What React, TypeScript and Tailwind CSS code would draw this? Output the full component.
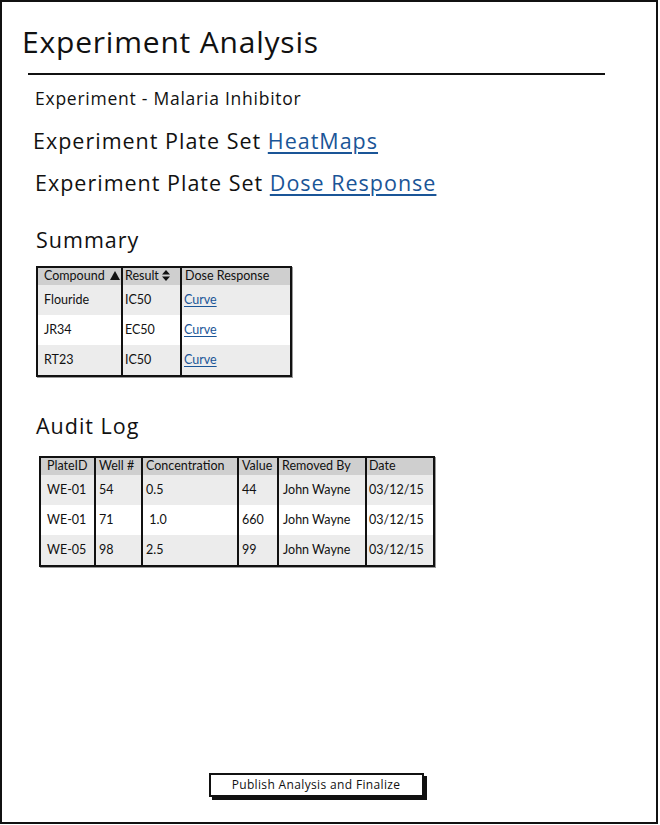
import React from "react";

const summaryRows = [
  { compound: "Flouride", result: "IC50" },
  { compound: "JR34", result: "EC50" },
  { compound: "RT23", result: "IC50" },
];

const auditRows = [
  { plate: "WE-01", well: "54", conc: "0.5", value: "44", by: "John Wayne", date: "03/12/15" },
  { plate: "WE-01", well: "71", conc: "\u00a01.0", value: "660", by: "John Wayne", date: "03/12/15" },
  { plate: "WE-05", well: "98", conc: "2.5", value: "99", by: "John Wayne", date: "03/12/15" },
];

const SortUp = () => (
  <svg width="10" height="9" viewBox="0 0 10 9" className="inline-block ml-[5px] -mt-[2px]">
    <path d="M5 0 L10 9 L0 9 Z" fill="#111" />
  </svg>
);

const SortBoth = () => (
  <svg width="8" height="11" viewBox="0 0 8 11" className="inline-block ml-[3px] -mt-[2px]">
    <path d="M4 0 L8 4.5 L0 4.5 Z M4 11 L0 6.5 L8 6.5 Z" fill="#111" />
  </svg>
);

const Cell = ({ children, divider = true }: { children: React.ReactNode; divider?: boolean }) => (
  <div className={`flex items-center pl-[6px] whitespace-nowrap ${divider ? "border-r-2 border-[#111]" : ""}`}>
    {children}
  </div>
);

const heading = { fontFamily: "'Open Sans', Lato, sans-serif" };

const App = () => {
  return (
    <div className="w-[660px] h-[825px] bg-white" style={{ fontFamily: "Lato, 'Open Sans', sans-serif" }}>
      <div className="w-[658px] h-[824px] border-2 border-[#111] flex flex-col text-[#111]">
        <h1 className="ml-[20px] mt-[22px] text-[30px] leading-[36px] tracking-[0.8px]" style={heading}>
          Experiment Analysis
        </h1>
        <div className="ml-[26px] mt-[13px] w-[577px] h-[2px] bg-[#111]" />
        <p className="ml-[33px] mt-[12px] text-[17.5px] leading-[22px] tracking-[0.75px]" style={heading}>
          Experiment - Malaria Inhibitor
        </p>
        <p className="ml-[31px] mt-[19px] text-[21.5px] leading-[26px] tracking-[1px]" style={heading}>
          Experiment Plate Set <a className="text-[#1a5597] underline underline-offset-[3px]">HeatMaps</a>
        </p>
        <p className="ml-[33px] mt-[16px] text-[21.5px] leading-[26px] tracking-[1px]" style={heading}>
          Experiment Plate Set <a className="text-[#1a5597] underline underline-offset-[3px]">Dose Response</a>
        </p>
        <h2 className="ml-[34px] mt-[31px] text-[21.5px] leading-[26px] tracking-[1px]" style={heading}>
          Summary
        </h2>

        <div className="ml-[34px] mt-[13px] w-[256px] border-2 border-[#111] text-[12.5px] leading-none shadow-[1px_1px_0_#999]">
          <div className="grid grid-cols-[85px_59px_108px] h-[17px] bg-[#cfcfcf]">
            <Cell>
              Compound
              <SortUp />
            </Cell>
            <Cell>
              <span className="-ml-[4px]">Result</span>
              <SortBoth />
            </Cell>
            <Cell divider={false}>
              <span className="-ml-[3px]">Dose Response</span>
            </Cell>
          </div>
          {summaryRows.map((r, i) => (
            <div
              key={i}
              className={`grid grid-cols-[85px_59px_108px] h-[30px] ${i % 2 === 0 ? "bg-[#ececec]" : "bg-white"}`}
            >
              <Cell>{r.compound}</Cell>
              <Cell>
                <span className="-ml-[4px]">{r.result}</span>
              </Cell>
              <Cell divider={false}>
                <a className="text-[#1a5597] underline underline-offset-2 -ml-[4px]">Curve</a>
              </Cell>
            </div>
          ))}
        </div>

        <h2 className="ml-[34px] mt-[36px] text-[21.5px] leading-[26px] tracking-[1px]" style={heading}>
          Audit Log
        </h2>

        <div className="ml-[37px] mt-[17px] w-[396px] border-2 border-[#111] text-[12.5px] leading-none shadow-[1px_1px_0_#999]">
          <div className="grid grid-cols-[55px_47px_96px_40px_88px_66px] h-[17px] bg-[#cfcfcf]">
            <Cell>PlateID</Cell>
            <Cell>
              <span className="-ml-[3px]">Well #</span>
            </Cell>
            <Cell>
              <span className="-ml-[3px]">Concentration</span>
            </Cell>
            <Cell>
              <span className="-ml-[3px]">Value</span>
            </Cell>
            <Cell>
              <span className="-ml-[3px]">Removed By</span>
            </Cell>
            <Cell divider={false}>
              <span className="-ml-[4px]">Date</span>
            </Cell>
          </div>
          {auditRows.map((r, i) => (
            <div
              key={i}
              className={`grid grid-cols-[55px_47px_96px_40px_88px_66px] h-[30px] ${i % 2 === 0 ? "bg-[#ececec]" : "bg-white"}`}
            >
              <Cell>{r.plate}</Cell>
              <Cell>
                <span className="-ml-[3px]">{r.well}</span>
              </Cell>
              <Cell>
                <span className="-ml-[3px]">{r.conc}</span>
              </Cell>
              <Cell>
                <span className="-ml-[3px]">{r.value}</span>
              </Cell>
              <Cell>
                <span className="-ml-[2px]">{r.by}</span>
              </Cell>
              <Cell divider={false}>
                <span className="-ml-[4px]">{r.date}</span>
              </Cell>
            </div>
          ))}
        </div>

        <div className="flex-1" />
        <div className="mb-[25px] flex justify-center">
          <button
            className="ml-[-26px] w-[215px] h-[24px] border-2 border-[#111] bg-white text-[12px] tracking-[0.35px] shadow-[3px_3px_0_#111]"
            style={heading}
          >
            Publish Analysis and Finalize
          </button>
        </div>
      </div>
    </div>
  );
};

export default App;
